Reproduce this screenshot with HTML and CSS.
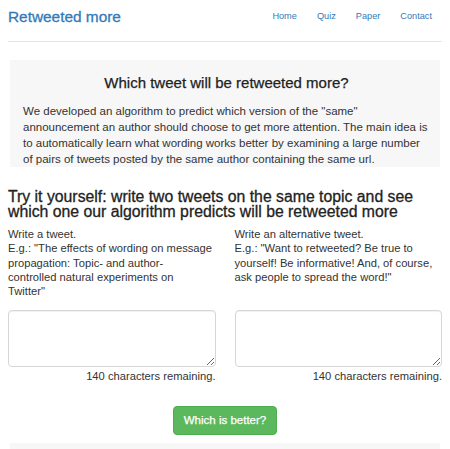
FILE: index.html
```html
<!DOCTYPE html>
<html lang="en">
<head>
    <meta charset="UTF-8">
    <meta name="viewport" content="width=device-width, initial-scale=1">
    <title>Retweeted more</title>
    <link rel="stylesheet" href="styles.css">
</head>
<body>
    <div class="container">
        <!-- Header with brand and navigation -->
        <div class="header">
            <h3 class="brand"><a href="#">Retweeted more</a></h3>
            <ul class="nav">
                <li><a href="#">Home</a></li>
                <li><a href="#">Quiz</a></li>
                <li><a href="#">Paper</a></li>
                <li><a href="#">Contact</a></li>
            </ul>
        </div>

        <div class="jumbotron">
            <h3>Which tweet will be retweeted more?</h3>
            <p>We developed an algorithm to predict which version of the "same" announcement an author should choose to get more attention. The main idea is to automatically learn what wording works better by examining a large number of pairs of tweets posted by the same author containing the same url.</p>
        </div>

        <h3 class="try">Try it yourself: write two tweets on the same topic and see which one our algorithm predicts will be retweeted more</h3>

        <div class="tweetGrid">
            <div class="hint">Write a tweet.<br>E.g.: "The effects of wording on message propagation: Topic- and author-<br>controlled natural experiments on<br>Twitter"</div>
            <div class="hint">Write an alternative tweet.<br>E.g.: "Want to retweeted? Be true to yourself! Be informative! And, of course, ask people to spread the word!"</div>
            <textarea id="tweet1" maxlength="140"></textarea>
            <textarea id="tweet2" maxlength="140"></textarea>
            <div class="remaining"><span id="count1">140</span> characters remaining.</div>
            <div class="remaining"><span id="count2">140</span> characters remaining.</div>
        </div>

        <div class="buttonRow">
            <button id="compareBtn">Which is better?</button>
        </div>

        <div class="jumbotron result" id="result"></div>
    </div>

    <script>
        // Update the remaining character counters
        for (let i = 1; i <= 2; i++) {
            document.getElementById('tweet' + i).addEventListener('input', function() {
                document.getElementById('count' + i).textContent = 140 - this.value.length;
            });
        }
    </script>
</body>
</html>
```
FILE: styles.css
```css
body {
    margin: 0;
    font-family: "Liberation Sans", Arial, sans-serif;
    color: #333;
    background: #fff;
}
a {
    color: #337ab7;
    text-decoration: none;
}
.container {
    padding: 0 8px;
}
/* Header */
.header {
    display: flex;
    justify-content: space-between;
    align-items: flex-start;
    padding-top: 7px;
    padding-bottom: 14px;
    border-bottom: 1px solid #e5e5e5;
}
.brand {
    margin: 0;
    font-size: 15.4px;
    line-height: 20px;
    font-weight: normal;
    -webkit-text-stroke: 0.3px #337ab7; /* medium weight look */
}
.nav {
    display: flex;
    list-style: none;
    margin: 3px 0 0 0;
    padding: 0;
}
.nav li a {
    display: block;
    padding: 0 10px;
    font-size: 9.2px;
    line-height: 12px;
}
/* Grey boxes */
.jumbotron {
    background: #f7f7f7;
    margin: 18px 2px 0 2px;
    padding: 14px 10px 0 13px;
}
.jumbotron h3 {
    margin: 0;
    text-align: center;
    font-size: 15px;
    line-height: 18px;
    font-weight: normal;
    color: #222;
    -webkit-text-stroke: 0.25px #222;
}
.jumbotron p {
    margin: 11px 0 0 0;
    font-size: 11.5px;
    line-height: 16px;
}
.try {
    margin: 22px 0 0 0;
    font-size: 15.8px;
    line-height: 15px;
    font-weight: normal;
    color: #222;
    -webkit-text-stroke: 0.3px #222;
}
/* Two tweet columns */
.tweetGrid {
    display: grid;
    grid-template-columns: 1fr 1fr;
    column-gap: 19px;
    margin-top: 8px;
    font-size: 11.2px;
    line-height: 14.3px;
}
.tweetGrid textarea {
    display: block;
    box-sizing: border-box;
    width: 100%;
    height: 57px;
    margin-top: 12px;
    border: 1px solid #d6d6d6;
    border-radius: 4px;
    box-shadow: inset 0 1px 1px rgba(0,0,0,0.06);
    font-family: inherit;
}
.remaining {
    text-align: right;
    margin-top: 2px;
}
.buttonRow {
    text-align: center;
    margin-top: 22px;
}
button {
    font-family: inherit;
    font-size: 11.5px;
    line-height: 16px;
    padding: 5px 10px 6px 10px;
    color: #fff;
    background-color: #5cb85c;
    border: 1px solid #4cae4c;
    border-radius: 4px;
    -webkit-text-stroke: 0.25px #fff;
    cursor: pointer;
}
.result {
    margin-top: 8px;
    min-height: 20px;
    padding: 0;
}
```
